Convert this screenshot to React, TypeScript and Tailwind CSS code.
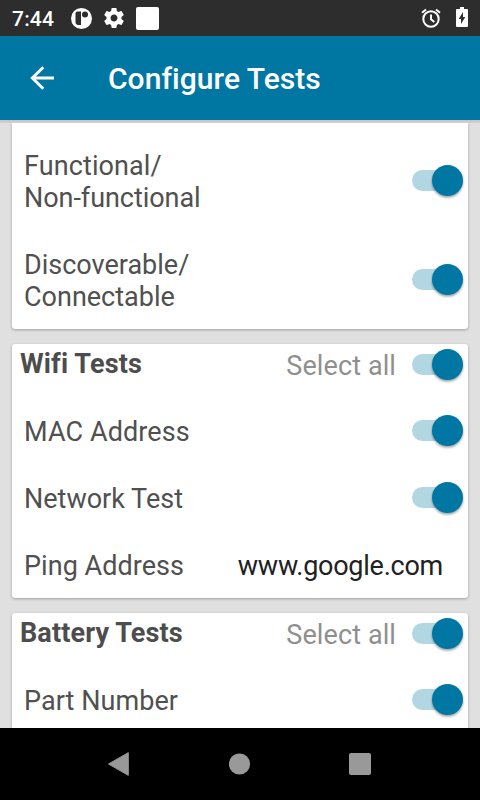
import React from "react";

function Switch() {
  return (
    <svg width="60" height="40" viewBox="0 0 60 40" className="block shrink-0">
      <defs>
        <filter id="thumb" x="-30%" y="-30%" width="160%" height="160%">
          <feDropShadow dx="0" dy="1.5" stdDeviation="1.3" floodColor="#000" floodOpacity="0.4" />
        </filter>
      </defs>
      <rect x="4" y="9" width="44" height="21" rx="10.5" fill="#b2d6e2" />
      <circle cx="39.5" cy="19.5" r="15.5" fill="#0077a2" filter="url(#thumb)" />
    </svg>
  );
}

function Label({ children, tracking = "" }: { children: React.ReactNode; tracking?: string }) {
  return <div className={`pt-0.5 text-[27px] leading-8 text-[#505050] ${tracking}`}>{children}</div>;
}

function Row({ children, h, tracking }: { children: React.ReactNode; h: string; tracking?: string }) {
  return (
    <div className={`flex items-center justify-between pl-3 ${h}`}>
      <Label tracking={tracking}>{children}</Label>
      <Switch />
    </div>
  );
}

function Header({ title, tracking }: { title: string; tracking: string }) {
  return (
    <div className="flex h-[41px] items-center pl-2">
      <div className={`pb-px text-[27px] leading-8 font-bold text-[#4d4d4d] ${tracking}`}>{title}</div>
      <div className="mr-3 ml-auto pt-[3px] text-[27px] leading-8 tracking-[0.1px] text-[#8f8f8f]">Select all</div>
      <Switch />
    </div>
  );
}

function StatusBar() {
  return (
    <div className="flex h-9 shrink-0 items-center bg-[#2d2d2d] text-white">
      <span className="ml-3 w-[59px] pt-[3px] text-[21px] font-medium tracking-[0.2px]">7:44</span>
      <svg width="21" height="21" viewBox="0 0 21 21">
        <circle cx="10.5" cy="10.5" r="10.5" fill="#fff" />
        <path d="M6.5 3.5H10V17H7.5A3 3 0 0 1 4.5 14V5.5A2 2 0 0 1 6.5 3.5Z" fill="#2d2d2d" />
        <circle cx="14" cy="6.5" r="3" fill="#2d2d2d" />
      </svg>
      <svg width="24" height="24" viewBox="0 0 24 24" className="ml-[10px]">
        <path
          fill="#fff"
          d="M19.43 12.98c.04-.32.07-.64.07-.98s-.03-.66-.07-.98l2.11-1.65c.19-.15.24-.42.12-.64l-2-3.46c-.12-.22-.39-.3-.61-.22l-2.49 1c-.52-.4-1.08-.73-1.69-.98l-.38-2.65C14.46 2.18 14.25 2 14 2h-4c-.25 0-.46.18-.49.42l-.38 2.65c-.61.25-1.17.59-1.69.98l-2.49-1c-.23-.09-.49 0-.61.22l-2 3.46c-.13.22-.07.49.12.64l2.11 1.65c-.04.32-.07.65-.07.98s.03.66.07.98l-2.11 1.65c-.19.15-.24.42-.12.64l2 3.46c.12.22.39.3.61.22l2.49-1c.52.4 1.08.73 1.69.98l.38 2.65c.03.24.24.42.49.42h4c.25 0 .46-.18.49-.42l.38-2.65c.61-.25 1.17-.59 1.69-.98l2.49 1c.23.09.49 0 .61-.22l2-3.46c.12-.22.07-.49-.12-.64l-2.11-1.65zM12 15.5c-1.93 0-3.5-1.57-3.5-3.5s1.57-3.5 3.5-3.5 3.5 1.57 3.5 3.5-1.57 3.5-3.5 3.5z"
        />
      </svg>
      <div className="ml-[10px] size-[23px] rounded-[2px] bg-white" />
      <svg width="20" height="20" viewBox="0 0 20 20" className="ml-auto" fill="none" stroke="#fff" strokeWidth="2">
        <circle cx="10" cy="11" r="7.7" />
        <path d="M10 6.5V11.3L13.3 14M1 4.7L5 1.4M19 4.7L15 1.4" />
      </svg>
      <svg width="12" height="20" viewBox="0 0 12 20" className="mr-3 mb-0.5 ml-[15px]">
        <path d="M4 0H8V2H11A1 1 0 0 1 12 3V19A1 1 0 0 1 11 20H1A1 1 0 0 1 0 19V3A1 1 0 0 1 1 2H4Z" fill="#fff" />
        <path d="M7 5V10H9.3L5 17V12H2.7Z" fill="#2d2d2d" />
      </svg>
    </div>
  );
}

function NavBar() {
  return (
    <div className="flex h-[72px] shrink-0 items-center justify-between bg-black px-[107px]">
      <svg width="24" height="24" viewBox="0 0 24 24">
        <path d="M1.5 12L21.3 0.7V23.3Z" fill="#999" stroke="#999" strokeLinejoin="round" />
      </svg>
      <svg width="22" height="22" viewBox="0 0 22 22">
        <circle cx="10.5" cy="11" r="10.6" fill="#999" />
      </svg>
      <div className="mr-[2px] size-[22px] rounded-[2px] bg-[#999]" />
    </div>
  );
}

const card = "mx-3 shrink-0 bg-white shadow-[0_1px_3px_rgba(0,0,0,0.3)]";

export default function App() {
  return (
    <div className="flex h-[800px] w-[480px] flex-col overflow-hidden bg-[#e0e0e0] font-[Roboto,sans-serif]">
      <StatusBar />
      <div className="flex h-[84px] shrink-0 items-center bg-[#0077a2] text-white">
        <svg width="24" height="24" viewBox="0 0 24 24" className="ml-[30px]" fill="none" stroke="#fff" strokeWidth="2.9">
          <path d="M24 12H2.5M13.3 1.3L2.3 12L13.3 22.7" />
        </svg>
        <span className="ml-[54px] text-[30px] font-medium tracking-[0.04px]">Configure Tests</span>
      </div>
      <div className="h-[3px] shrink-0 bg-linear-to-b from-[#c4c4c4] to-[#d2d2d2]" />
      <div className="flex h-[605px] shrink-0 flex-col overflow-hidden">
        <div className={`${card} h-[206px] rounded-b-[3px]`}>
          <Row h="h-[115px]" tracking="tracking-[-0.05px]">
            <span className="tracking-[0.1px]">Functional/</span>
            <br />
            Non-functional
          </Row>
          <Row h="h-[83px]">Discoverable/<br />Connectable</Row>
        </div>
        <div className={`${card} mt-[15px] h-[254px] rounded-[3px]`}>
          <Header title="Wifi Tests" tracking="tracking-[0.15px]" />
          <Row h="h-[92px]" tracking="tracking-[0.1px]">MAC Address</Row>
          <Row h="h-[42px]">Network Test</Row>
          <div className="flex h-[92px] items-center justify-between pr-[25px] pl-3">
            <Label tracking="tracking-[0.04px]">Ping Address</Label>
            <div className="pt-0.5 text-[27px] leading-8 tracking-[-0.25px] text-[#212121]">www.google.com</div>
          </div>
        </div>
        <div className={`${card} mt-[15px] h-[254px] rounded-[3px]`}>
          <Header title="Battery Tests" tracking="tracking-[0.12px]" />
          <Row h="h-[92px]" tracking="tracking-[0.06px]">Part Number</Row>
        </div>
      </div>
      <NavBar />
    </div>
  );
}
